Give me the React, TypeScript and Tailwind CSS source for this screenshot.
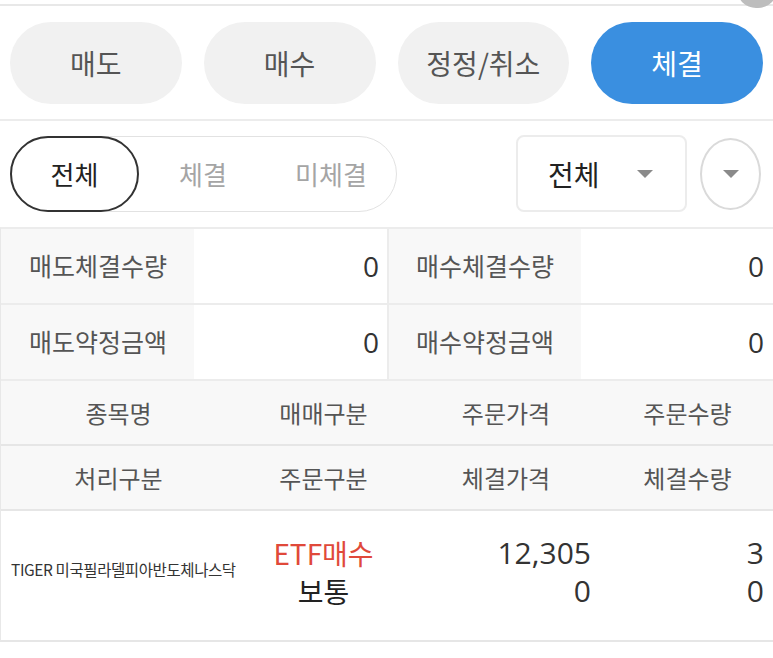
import React from "react";

const font = { fontFamily: '"Noto Sans CJK KR", "Noto Sans", sans-serif' };
const numFont = { fontFamily: '"Open Sans", "Noto Sans", sans-serif' };

function Caret({ className = "" }: { className?: string }) {
  return (
    <svg width="18" height="10" viewBox="0 0 18 10" className={className}>
      <path d="M1 1 L17 1 L9 9 Z" fill="#8a8a8a" />
    </svg>
  );
}

export default function App() {
  const tabs = ["매도", "매수", "정정/취소", "체결"];
  return (
    <div className="w-[773px] h-[658px] bg-white overflow-hidden relative" style={font}>
      {/* top strip */}
      <div className="h-[4px]" />
      <div className="h-[2px] bg-[#e8e8e8]" />
      <div className="absolute right-[-4px] top-[-30px] w-[40px] h-[38px] rounded-full bg-[#bdbdbd]" />

      {/* main tabs */}
      <div className="flex gap-[22px] px-[10px] pt-[16px] pb-[15px]">
        {tabs.map((t, i) => (
          <div
            key={t}
            className={
              "w-[172px] h-[82px] rounded-full flex items-center justify-center text-[28px] " +
              (i === 3 ? "bg-[#3a8fe0] text-white" : "bg-[#f1f1f1] text-[#555]")
            }
          >
            {t}
          </div>
        ))}
      </div>
      <div className="h-[2px] bg-[#ececec]" />

      {/* filter row */}
      <div className="flex items-center px-[10px] pt-[14px] pb-[15px]">
        <div className="w-[387px] h-[76px] rounded-full border border-[#e2e2e2] flex items-center">
          <div className="w-[129px] h-[76px] -ml-px rounded-full border-2 border-[#333] flex items-center justify-center text-[26px] text-[#222]">
            전체
          </div>
          <div className="w-[128px] text-center text-[26px] text-[#a5a5a5]">체결</div>
          <div className="w-[128px] text-center text-[26px] text-[#a5a5a5]">미체결</div>
        </div>
        <div className="ml-[119px] w-[171px] h-[77px] rounded-[8px] border-2 border-[#ececec] flex items-center pl-[30px] text-[28px] text-[#222]">
          <span>전체</span>
          <Caret className="ml-[36px]" />
        </div>
        <div className="ml-[13px] w-[61px] h-[72px] rounded-[50%] border-2 border-[#dadada] flex items-center justify-center">
          <Caret />
        </div>
      </div>

      {/* summary */}
      <div className="border-t-2 border-[#ececec] border-l border-l-[#e8e8e8]">
        {[
          ["매도체결수량", "0", "매수체결수량", "0"],
          ["매도약정금액", "0", "매수약정금액", "0"],
        ].map((r, i) => (
          <div key={i} className="grid grid-cols-[193px_193px_194px_193px] h-[76px] border-b-2 border-[#ececec]">
            <div className="bg-[#f8f8f8] flex items-center pl-[28px] text-[25px] text-[#555]">{r[0]}</div>
            <div className="flex items-center justify-end pr-[8px] text-[28px] text-[#333]" style={numFont}>{r[1]}</div>
            <div className="bg-[#f8f8f8] border-l-2 border-[#ececec] flex items-center pl-[27px] text-[25px] text-[#555]">{r[2]}</div>
            <div className="flex items-center justify-end pr-[10px] text-[28px] text-[#333]" style={numFont}>{r[3]}</div>
          </div>
        ))}
      </div>

      {/* header */}
      <div className="bg-[#f8f8f8] border-l border-l-[#e8e8e8]">
        {[
          ["종목명", "매매구분", "주문가격", "주문수량"],
          ["처리구분", "주문구분", "체결가격", "체결수량"],
        ].map((r, i) => (
          <div key={i} className="grid grid-cols-[235px_175px_190px_173px] h-[65px] border-b-2 border-[#e6e6e6] text-[24px] text-[#555]">
            {r.map((c) => (
              <div key={c} className="flex items-center justify-center">{c}</div>
            ))}
          </div>
        ))}
      </div>

      {/* data row */}
      <div className="grid grid-cols-[235px_175px_190px_173px] h-[131px] border-b-2 border-[#e6e6e6] border-l border-l-[#e8e8e8]">
        <div className="flex items-center pl-[10px] pb-[12px] text-[15.5px] text-[#333] tracking-[-0.4px] whitespace-nowrap">
          TIGER 미국필라델피아반도체나스닥
        </div>
        <div className="flex flex-col items-center justify-center text-[28px] leading-[38px] pb-[8px]">
          <span className="text-[#e0493a]">ETF매수</span>
          <span className="text-[#222]">보통</span>
        </div>
        <div className="flex flex-col items-end justify-center pr-[10px] text-[30px] leading-[38px] text-[#333] pb-[8px]" style={numFont}>
          <span>12,305</span>
          <span>0</span>
        </div>
        <div className="flex flex-col items-end justify-center pr-[10px] text-[30px] leading-[38px] text-[#333] pb-[8px]" style={numFont}>
          <span>3</span>
          <span>0</span>
        </div>
      </div>
    </div>
  );
}
